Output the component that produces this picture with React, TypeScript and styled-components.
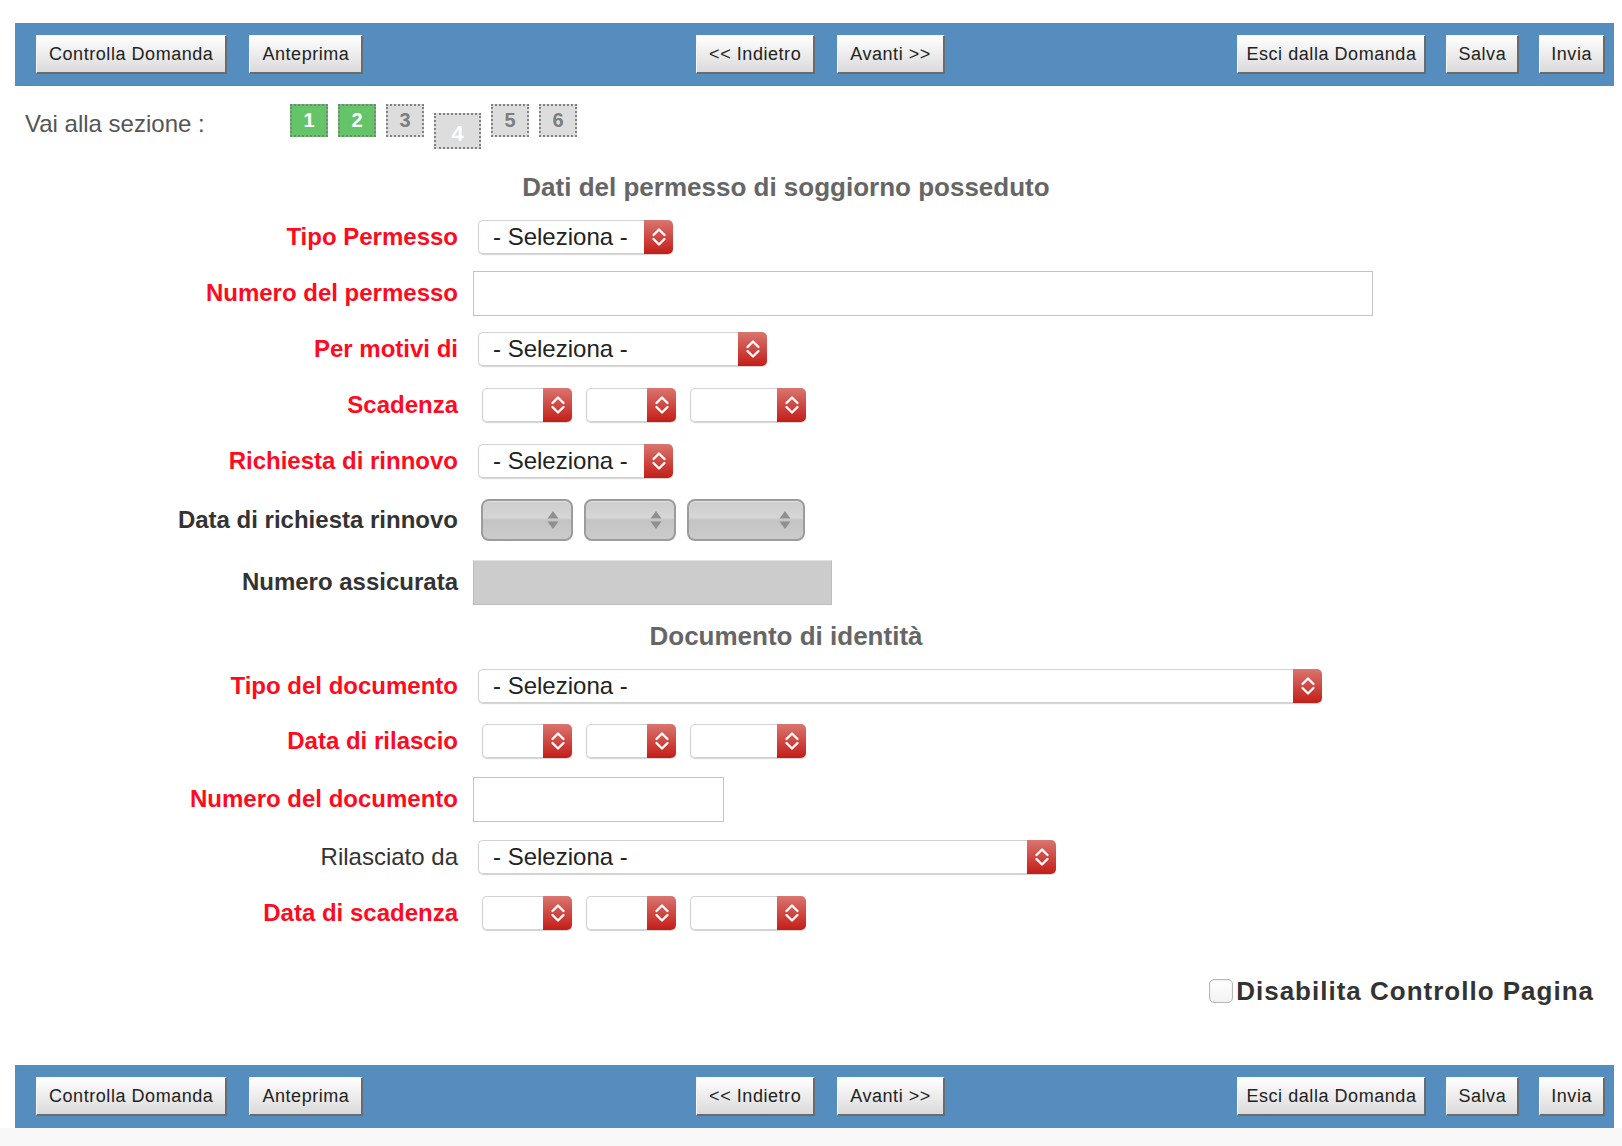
import React from "react";
import styled, { createGlobalStyle } from "styled-components";

const GlobalStyle = createGlobalStyle`
  html, body {
    margin: 0;
    padding: 0;
    background: #ffffff;
  }
  body {
    font-family: "Liberation Sans", Arial, sans-serif;
    width: 1622px;
    min-height: 1146px;
  }
`;

const Page = styled.div`
  width: 1622px;
  padding-top: 23px;
`;

const Bar = styled.div`
  margin: 0 8px 0 15px;
  height: 63px;
  box-sizing: border-box;
  padding: 0 9px 0 21px;
  background: #558dbf;
  display: grid;
  grid-template-columns: 1fr auto 1fr;
  align-items: center;
`;

const BarGroup = styled.div<{ $align: "start" | "center" | "end"; $gap: number }>`
  display: flex;
  gap: ${(p) => p.$gap}px;
  justify-self: ${(p) => p.$align};
`;

const BarButton = styled.button<{ $pad?: number }>`
  height: 39px;
  padding: 0 ${(p) => p.$pad ?? 12}px;
  font-family: "Liberation Sans", Arial, sans-serif;
  font-size: 18px;
  letter-spacing: 0.55px;
  color: #222;
  background: linear-gradient(#ffffff, #dadada);
  border-style: solid;
  border-width: 1px 2px 2px 1px;
  border-color: #f6f6f6 #6b6b6b #6b6b6b #f6f6f6;
  cursor: pointer;
`;

const SectionNav = styled.div`
  height: 79px;
  box-sizing: border-box;
  padding: 18px 0 0 25px;
  display: flex;
  align-items: flex-start;
`;

const NavLabel = styled.span`
  width: 265px;
  margin-top: 4px;
  font-size: 24px;
  line-height: 32px;
  color: #555;
`;

const NavBoxes = styled.div`
  display: flex;
  gap: 10px;
  align-items: flex-start;
`;

type SectionState = "done" | "todo" | "current";

const SectionBox = styled.span<{ $state: SectionState }>`
  box-sizing: border-box;
  width: ${(p) => (p.$state === "current" ? 47 : 38)}px;
  height: ${(p) => (p.$state === "current" ? 36 : 33)}px;
  margin-top: ${(p) => (p.$state === "current" ? 9 : 0)}px;
  border: 2px dotted #808080;
  background: ${(p) => (p.$state === "done" ? "#66c468" : "#dddddd")};
  color: ${(p) => (p.$state === "todo" ? "#7d7d7d" : "#ffffff")};
  font-size: ${(p) => (p.$state === "current" ? 22 : 20)}px;
  font-weight: 700;
  display: flex;
  align-items: center;
  justify-content: center;
  padding-top: ${(p) => (p.$state === "current" ? 5 : 0)}px;
`;

const SectionTitle = styled.h2`
  margin: 0;
  width: 1572px;
  height: 44px;
  line-height: 44px;
  text-align: center;
  font-size: 26px;
  font-weight: 700;
  color: #666;
`;

const FormRow = styled.div<{ $h: number }>`
  height: ${(p) => p.$h}px;
  display: grid;
  grid-template-columns: 458px 1fr;
  column-gap: 15px;
  align-items: center;
`;

type LabelTone = "required" | "strong" | "plain";

const Label = styled.label<{ $tone: LabelTone }>`
  text-align: right;
  font-size: 24px;
  font-weight: ${(p) => (p.$tone === "plain" ? 400 : 700)};
  color: ${(p) => (p.$tone === "required" ? "#ff0a1e" : "#333")};
  white-space: nowrap;
`;

const Controls = styled.div<{ $offset?: number; $gap?: number }>`
  display: flex;
  align-items: center;
  gap: ${(p) => p.$gap ?? 14}px;
  margin-left: ${(p) => p.$offset ?? 0}px;
`;

const SelectBox = styled.div<{ $w: number }>`
  width: ${(p) => p.$w}px;
  height: 34px;
  display: flex;
  border-radius: 5px;
  box-shadow: 0 1px 1px rgba(0, 0, 0, 0.18);
`;

const SelectText = styled.span`
  flex: 1;
  min-width: 0;
  box-sizing: border-box;
  padding-left: 14px;
  border: 1px solid #d2d2d2;
  border-right: none;
  border-radius: 5px 0 0 5px;
  background: #fff;
  font-size: 24px;
  line-height: 32px;
  color: #222;
  white-space: nowrap;
  overflow: hidden;
`;

const SelectArrow = styled.span`
  width: 29px;
  flex: none;
  border-radius: 0 5px 5px 0;
  background: linear-gradient(#d9756f, #c41d18);
  display: flex;
  align-items: center;
  justify-content: center;
`;

const DisabledBox = styled.div<{ $w: number }>`
  width: ${(p) => p.$w}px;
  height: 42px;
  box-sizing: border-box;
  border: 2px solid #9c9c9c;
  border-radius: 8px;
  background: linear-gradient(#cdcdcd 0%, #d6d6d6 44%, #c4c4c4 50%, #cbcbcb 100%);
  box-shadow: inset 0 1px 0 rgba(255, 255, 255, 0.45);
  display: flex;
  align-items: center;
  justify-content: flex-end;
  padding-right: 12px;
`;

const TextInput = styled.div<{ $w: number; $disabled?: boolean }>`
  width: ${(p) => p.$w}px;
  height: 45px;
  box-sizing: border-box;
  border: 1px solid ${(p) => (p.$disabled ? "#bdbdbd" : "#c4c4c4")};
  border-top-color: ${(p) => (p.$disabled ? "#e2e2e2" : "#c4c4c4")};
  background: ${(p) => (p.$disabled ? "#cccccc" : "#ffffff")};
`;

const ConfirmRow = styled.div`
  height: 100px;
  display: flex;
  align-items: center;
  justify-content: flex-end;
  padding-right: 28px;
  margin-bottom: 24px;
`;

const CheckBox = styled.span`
  width: 22px;
  height: 22px;
  border: 1px solid #b7b7b7;
  border-radius: 5px;
  background: linear-gradient(#ffffff, #f2f2f2);
  box-shadow: inset 0 1px 2px rgba(0, 0, 0, 0.08);
`;

const CheckText = styled.span`
  margin-left: 3px;
  font-size: 26px;
  font-weight: 700;
  letter-spacing: 1px;
  color: #333;
`;

const FooterStrip = styled.div`
  height: 18px;
  background: #f8f8f8;
`;

const Chevrons = () => (
  <svg width="16" height="22" viewBox="0 0 16 22" fill="none">
    <path d="M2.5 9 L8 3.5 L13.5 9" stroke="#fff" strokeWidth="2.3" strokeLinecap="round" strokeLinejoin="round" />
    <path d="M2.5 13 L8 18.5 L13.5 13" stroke="#fff" strokeWidth="2.3" strokeLinecap="round" strokeLinejoin="round" />
  </svg>
);

const GreyArrows = () => (
  <svg width="12" height="22" viewBox="0 0 12 22">
    <path d="M6 2 L11.5 9.5 L0.5 9.5 Z" fill="#8f8f8f" />
    <path d="M6 20 L11.5 12.5 L0.5 12.5 Z" fill="#8f8f8f" />
  </svg>
);

const Select = ({ w, text }: { w: number; text?: string }) => (
  <SelectBox $w={w}>
    <SelectText>{text}</SelectText>
    <SelectArrow>
      <Chevrons />
    </SelectArrow>
  </SelectBox>
);

const DateSelects = () => (
  <Controls $offset={9} $gap={14}>
    <Select w={90} />
    <Select w={90} />
    <Select w={116} />
  </Controls>
);

const ToolBar = () => (
  <Bar>
    <BarGroup $align="start" $gap={22}>
      <BarButton>Controlla Domanda</BarButton>
      <BarButton>Anteprima</BarButton>
    </BarGroup>
    <BarGroup $align="center" $gap={22}>
      <BarButton>&lt;&lt; Indietro</BarButton>
      <BarButton>Avanti &gt;&gt;</BarButton>
    </BarGroup>
    <BarGroup $align="end" $gap={20}>
      <BarButton $pad={8}>Esci dalla Domanda</BarButton>
      <BarButton $pad={11}>Salva</BarButton>
      <BarButton $pad={11}>Invia</BarButton>
    </BarGroup>
  </Bar>
);

const sections: { n: number; state: SectionState }[] = [
  { n: 1, state: "done" },
  { n: 2, state: "done" },
  { n: 3, state: "todo" },
  { n: 4, state: "current" },
  { n: 5, state: "todo" },
  { n: 6, state: "todo" },
];

const SEL = "- Seleziona -";

const App = (): React.ReactElement => (
  <Page>
    <GlobalStyle />
    <ToolBar />

    <SectionNav>
      <NavLabel>Vai alla sezione :</NavLabel>
      <NavBoxes>
        {sections.map((s) => (
          <SectionBox key={s.n} $state={s.state}>
            {s.n}
          </SectionBox>
        ))}
      </NavBoxes>
    </SectionNav>

    <SectionTitle>Dati del permesso di soggiorno posseduto</SectionTitle>

    <FormRow $h={56}>
      <Label $tone="required">Tipo Permesso</Label>
      <Controls $offset={5}>
        <Select w={195} text={SEL} />
      </Controls>
    </FormRow>
    <FormRow $h={56}>
      <Label $tone="required">Numero del permesso</Label>
      <TextInput $w={900} />
    </FormRow>
    <FormRow $h={56}>
      <Label $tone="required">Per motivi di</Label>
      <Controls $offset={5}>
        <Select w={289} text={SEL} />
      </Controls>
    </FormRow>
    <FormRow $h={56}>
      <Label $tone="required">Scadenza</Label>
      <DateSelects />
    </FormRow>
    <FormRow $h={56}>
      <Label $tone="required">Richiesta di rinnovo</Label>
      <Controls $offset={5}>
        <Select w={195} text={SEL} />
      </Controls>
    </FormRow>
    <FormRow $h={61}>
      <Label $tone="strong">Data di richiesta rinnovo</Label>
      <Controls $offset={8} $gap={11}>
        <DisabledBox $w={92}>
          <GreyArrows />
        </DisabledBox>
        <DisabledBox $w={92}>
          <GreyArrows />
        </DisabledBox>
        <DisabledBox $w={118}>
          <GreyArrows />
        </DisabledBox>
      </Controls>
    </FormRow>
    <FormRow $h={64}>
      <Label $tone="strong">Numero assicurata</Label>
      <TextInput $w={359} $disabled />
    </FormRow>

    <SectionTitle>Documento di identità</SectionTitle>

    <FormRow $h={55}>
      <Label $tone="required">Tipo del documento</Label>
      <Controls $offset={5}>
        <Select w={844} text={SEL} />
      </Controls>
    </FormRow>
    <FormRow $h={56}>
      <Label $tone="required">Data di rilascio</Label>
      <DateSelects />
    </FormRow>
    <FormRow $h={60}>
      <Label $tone="required">Numero del documento</Label>
      <TextInput $w={251} />
    </FormRow>
    <FormRow $h={56}>
      <Label $tone="plain">Rilasciato da</Label>
      <Controls $offset={5}>
        <Select w={578} text={SEL} />
      </Controls>
    </FormRow>
    <FormRow $h={56}>
      <Label $tone="required">Data di scadenza</Label>
      <DateSelects />
    </FormRow>

    <ConfirmRow>
      <CheckBox />
      <CheckText>Disabilita Controllo Pagina</CheckText>
    </ConfirmRow>

    <ToolBar />
    <FooterStrip />
  </Page>
);

export default App;
